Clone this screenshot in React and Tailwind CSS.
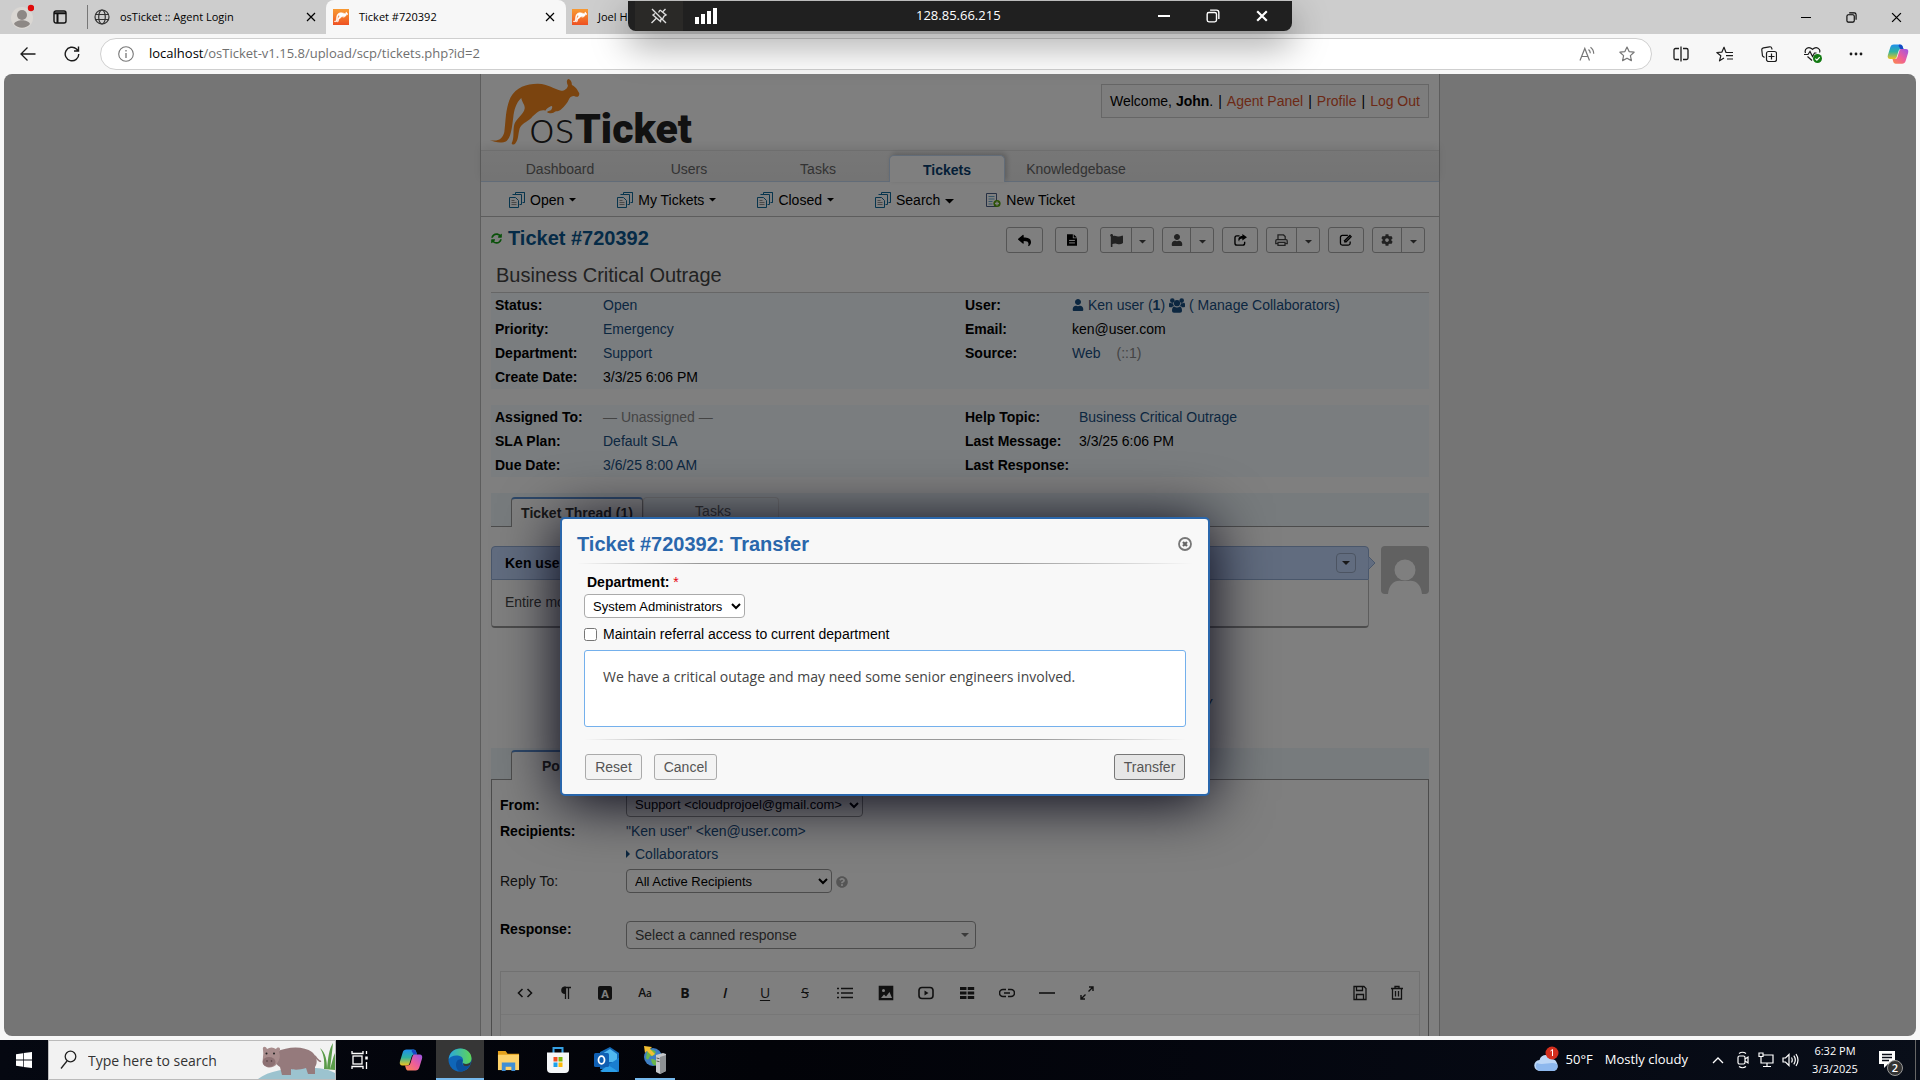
import React from "react";
import { FaReply, FaFlag, FaUser, FaCog, FaSyncAlt, FaQuestionCircle } from "react-icons/fa";

const ui = "font-['Open_Sans','Noto_Sans',sans-serif]";

const kangarooPath =
  "M30 210C52 216 68 208 73 186C78 150 76 116 92 82C108 52 140 41 172 41C204 40 222 58 244 62C254 62 262 56 264 47C259 38 260 28 266 27C272 28 276 36 276 45C288 50 294 62 298 70C299 78 294 82 288 80C280 76 272 80 268 86C262 100 254 108 244 118C238 126 226 122 222 128C216 132 204 130 202 127C200 122 210 124 214 119C218 112 218 108 214 108C206 112 200 116 196 122C180 118 168 130 154 144C140 156 124 162 119 176C114 194 116 208 107 219C103 225 96 225 95 220C104 206 98 182 103 164C106 148 132 132 134 116C136 104 126 98 124 84C108 98 102 122 100 142C96 172 94 200 80 213C66 221 44 217 30 210Z";

function Favicon() {
  return (
    <span className="flex size-4 shrink-0 items-center justify-center bg-linear-to-b from-[#f79a33] to-[#ee4f22]">
      <svg viewBox="28 22 274 208" className="size-[14px] text-white" fill="currentColor" stroke="currentColor" strokeWidth="10" aria-hidden="true">
        <path d={kangarooPath} />
      </svg>
    </span>
  );
}

function CloseX({ className = "size-[10px]", w = 1.2 }) {
  return (
    <svg viewBox="0 0 10 10" className={className} stroke="currentColor" strokeWidth={w} fill="none">
      <path d="M1 1L9 9M9 1L1 9" />
    </svg>
  );
}

function Restore({ className = "size-3" }) {
  return (
    <svg viewBox="0 0 12 12" className={className} stroke="currentColor" strokeWidth="1.2" fill="none">
      <rect x="1" y="3" width="8" height="8" rx="1.5" />
      <path d="M3.5 1H9a2 2 0 0 1 2 2v5.5" />
    </svg>
  );
}

function Copilot({ className }) {
  return (
    <svg viewBox="0 0 24 24" className={className} aria-hidden="true">
      <defs>
        <linearGradient id="cpA" x1="0" y1="0" x2="0" y2="1">
          <stop offset="0" stopColor="#1f8fef" />
          <stop offset=".5" stopColor="#2fb3a0" />
          <stop offset="1" stopColor="#f3c41d" />
        </linearGradient>
        <linearGradient id="cpB" x1="1" y1="0" x2="0" y2="1">
          <stop offset="0" stopColor="#9a55e8" />
          <stop offset=".5" stopColor="#ee5d9a" />
          <stop offset="1" stopColor="#fb8a4a" />
        </linearGradient>
      </defs>
      <path d="M7.5 1.5h7c1.600 0 2.200.8 2.700 2.300l.8 2.700h-2.500c-1.700 0-2.500.8-3 2.500l-1.900 6.300c-.5 1.600-1.200 2.200-2.800 2.200H3.500C1 17.500.3 15.700 1 13.200L3.700 4.400C4.400 2.300 5.500 1.500 7.500 1.500Z" fill="url(#cpA)" />
      <path d="M13.5 1.5c2 0 3 .8 3.700 2.800l.8 2.500h-3.200L12.500 3Z" fill="#1747c4" />
      <path d="M16.5 22.5h-7c-1.600 0-2.200-.8-2.700-2.300L6 17.500h2.500c1.700 0 2.500-.8 3-2.500l1.900-6.300c.5-1.600 1.200-2.200 2.800-2.200h4.300c2.500 0 3.200 1.800 2.500 4.300l-2.700 8.800c-.7 2.100-1.800 2.900-3.800 2.900Z" fill="url(#cpB)" />
    </svg>
  );
}

function TabStrip() {
  return (
    <div className={`flex h-[34px] items-stretch bg-[#cdcdcd] text-[11px] text-black ${ui}`}>
      <div className="flex w-[87px] shrink-0 items-center pl-[10px]">
        <svg viewBox="0 0 24 26" className="h-[26px] w-6">
          <circle cx="12" cy="14" r="11" fill="#dad7d3" />
          <circle cx="12" cy="11" r="5" fill="#8d8885" />
          <path d="M4 20c2-5 14-5 16 0c-4 5-12 5-16 0Z" fill="#8d8885" />
          <circle cx="21" cy="4" r="3.2" fill="#e00b0b" />
        </svg>
        <button aria-label="Tab actions" className="ml-[19px]">
          <svg viewBox="0 0 14 14" className="size-[14px]" fill="none" stroke="#111" strokeWidth="1.4">
            <rect x="1" y="1" width="12" height="12" rx="2" />
            <path d="M1 3.2h12M4.5 3.5V13" strokeWidth="2" />
          </svg>
        </button>
      </div>
      <div className="flex w-[239px] shrink-0 items-center">
        <span className="h-6 w-px bg-[#777]" />
        <svg viewBox="0 0 16 16" className="ml-[6px] size-4" fill="none" stroke="#333" strokeWidth="1.2">
          <circle cx="8" cy="8" r="7" />
          <ellipse cx="8" cy="8" rx="3.3" ry="7" />
          <path d="M1.5 5.5h13M1.5 10.5h13" />
        </svg>
        <span className="ml-[10px] flex-1">osTicket :: Agent Login</span>
        <button aria-label="Close tab" className="mr-[10px]"><CloseX /></button>
      </div>
      <div className="flex w-60 shrink-0 items-center rounded-t-lg bg-[#f7f7f7] pl-[7px]">
        <Favicon />
        <span className="ml-[10px] flex-1">Ticket #720392</span>
        <button aria-label="Close tab" className="mr-[11px]"><CloseX /></button>
      </div>
      <div className="flex w-60 items-center pl-[6px]">
        <Favicon />
        <span className="ml-[10px]">Joel H</span>
      </div>
      <div className="ml-auto flex items-center gap-[34px] pr-[18px]">
        <button aria-label="Minimize" className="flex w-3 justify-center"><span className="h-px w-[10px] bg-black" /></button>
        <button aria-label="Restore"><Restore className="size-[11px]" /></button>
        <button aria-label="Close"><CloseX className="size-[11px]" /></button>
      </div>
    </div>
  );
}

function AddressBar() {
  return (
    <div className="flex h-10 items-center bg-[#f7f7f7] text-[#1b1b1b]">
      <button aria-label="Back" className="ml-5">
        <svg viewBox="0 0 16 16" className="size-4" fill="none" stroke="currentColor" strokeWidth="1.3"><path d="M15.5 8H1M7.5 1.5L1 8l6.500 6.500" /></svg>
      </button>
      <button aria-label="Refresh" className="ml-7">
        <svg viewBox="0 0 16 16" className="size-4" fill="none" stroke="currentColor" strokeWidth="1.4"><path d="M14.800 8A6.800 6.800 0 1 1 12.500 2.900L14 4.500M14.500 0.500V5H10" /></svg>
      </button>
      <div className="ml-5 flex h-8 flex-1 items-center rounded-full border border-[#cfcfcf] bg-white">
        <svg viewBox="0 0 16 16" className="ml-[17px] size-4" fill="none" stroke="#777" strokeWidth="1.1">
          <circle cx="8" cy="8" r="7.3" />
          <path d="M8 7v5M8 4v1.500" strokeWidth="1.3" />
        </svg>
        <div className={`ml-[15px] flex-1 text-[13px] text-[#707070] ${ui}`}>
          <span className="text-black">localhost</span>/osTicket-v1.15.8/upload/scp/tickets.php?id=2
        </div>
        <button aria-label="Read aloud" className="mr-6 text-[#777]">
          <svg viewBox="0 0 16 16" className="size-4" fill="none" stroke="currentColor" strokeWidth="1.2"><path d="M1 14.500L5.800 2.500L10.500 14.500M2.600 10.500h6.400M9.500 3.500c1.300 1 1.800 2.300 1.800 3.800M11.500 1.200c2.200 1.600 3.200 3.800 3.200 6.600" /></svg>
        </button>
        <button aria-label="Favorite" className="mr-4 text-[#777]">
          <svg viewBox="0 0 16 16" className="size-4" fill="none" stroke="currentColor" strokeWidth="1.2" strokeLinejoin="round"><path d="M8 1l2.100 4.600 5 .6-3.700 3.400 1 5L8 12.200 3.600 14.600l1-5L.9 6.200l5-.6Z" /></svg>
        </button>
      </div>
      <div className="ml-[21px] flex items-center gap-[27px] pr-[11px]">
        <svg viewBox="0 0 16 16" className="size-4" fill="none" stroke="currentColor" strokeWidth="1.3"><path d="M6 2.500H2.500a1.500 1.500 0 0 0-1.500 1.500v8a1.500 1.500 0 0 0 1.500 1.500H6M10 2.500h3.500A1.500 1.500 0 0 1 15 4v8a1.500 1.500 0 0 1-1.500 1.500H10M8 0.500v15" /></svg>
        <svg viewBox="0 0 18 16" className="h-4 w-[18px]" fill="none" stroke="currentColor" strokeWidth="1.2" strokeLinejoin="round"><path d="M11 6.500H10L8 1.200 5.800 6.200.8 6.500 4.800 9.800 3.500 14.800 8 12M11 6.500h6M10 9.700h7M11 13h6" /></svg>
        <svg viewBox="0 0 16 16" className="size-4" fill="none" stroke="currentColor" strokeWidth="1.2"><path d="M3.500 11.500L1.500 10 .8 4A2 2 0 0 1 2.500 1.800L8.500.8A2 2 0 0 1 10.800 2.300L11 3.500" /><rect x="5.5" y="5.5" width="10" height="10" rx="2" /><path d="M10.500 7.500v6M7.500 10.500h6" /></svg>
        <svg viewBox="0 0 18 17" className="h-[17px] w-[18px]" fill="none" stroke="currentColor" strokeWidth="1.2"><path d="M1.500 7C0 3 4.500-.5 8.500 3.300C12.500-.5 17 3 15.500 6.500M0 8.500h4l2-3 2.500 5 2-3.500h2M3.500 10.500L8 14.500" /><circle cx="13.5" cy="12.5" r="4.5" fill="#137a13" stroke="none" /><path d="M11.300 12.600l1.600 1.500 2.800-3" stroke="#fff" /></svg>
        <svg viewBox="0 0 14 4" className="h-1 w-[14px]" fill="currentColor"><circle cx="2" cy="2" r="1.4" /><circle cx="7" cy="2" r="1.4" /><circle cx="12" cy="2" r="1.4" /></svg>
        <Copilot className="-ml-[3px] size-[22px]" />
      </div>
    </div>
  );
}

function RemoteBar() {
  return (
    <div className={`absolute top-px left-1/2 z-40 flex h-[30px] w-[664px] -translate-x-1/2 items-center rounded-b-lg bg-[#202020] text-white shadow-[0_14px_36px_rgba(0,0,0,0.38)] ${ui}`}>
      <button aria-label="Unpin" className="ml-[7px] flex h-full w-12 items-center justify-center bg-[#2a2927]">
        <svg viewBox="0 0 18 16" className="h-4 w-[18px]" fill="none" stroke="#ddd" strokeWidth="1.4"><path d="M2 1l14 14M10 2l6 5-2 1.200-1.500 3M10 2L8.500 4.500M5 5.500L3 7l7.500 6.500L11 11M6 10.500L1.500 15M15.500 1L13 3.500" /></svg>
      </button>
      <span className="ml-3 flex h-4 items-end gap-[2px]">
        <i className="h-[7px] w-1 bg-white" /><i className="h-[10px] w-1 bg-white" /><i className="h-[13px] w-1 bg-white" /><i className="h-4 w-1 bg-white" />
      </span>
      <span className="ml-[199px] text-[13px]">128.85.66.215</span>
      <div className="ml-auto flex items-center gap-9 pr-6">
        <button aria-label="Minimize"><span className="block h-[2px] w-3 bg-white" /></button>
        <button aria-label="Restore"><Restore className="size-[14px]" /></button>
        <button aria-label="Close"><CloseX className="size-3" w={1.8} /></button>
      </div>
    </div>
  );
}

function Pages() {
  return (
    <svg viewBox="0 0 16 16" className="size-4 shrink-0" fill="#fff" stroke="#0f6a9c" strokeWidth="1">
      <path d="M6.500.5h9v10h-2M6.500.5v2M15.500.5v10" /><path d="M3.500 2.500h9v10h-2" /><path d="M.5 5.500h6l3 3v7h-9Z" /><path d="M2.500 8.500h3M2.500 10.500h5M2.500 12.500h5" strokeWidth=".8" stroke="#777" />
    </svg>
  );
}

function Caret({ className = "w-[7px]" }) {
  return <svg viewBox="0 0 8 4" className={`shrink-0 ${className}`} fill="currentColor"><path d="M0 0h8L4 4Z" /></svg>;
}

function Group() {
  return (
    <svg viewBox="0 0 16 15" className="h-[15px] w-4 shrink-0" fill="currentColor">
      <circle cx="3.3" cy="2.6" r="2.3" />
      <circle cx="12.7" cy="2.6" r="2.3" />
      <circle cx="8" cy="5.2" r="3.1" />
      <path d="M0 8.500V6.500C0 5 .8 4.500 1.500 4.900C2.500 5.400 3.500 5.500 4.200 5.200C4.100 6.400 4.500 7.400 5.200 8.100C4.200 8.200 3.500 8.600 3 9.200H1Q0 9.200 0 8.500ZM16 8.500V6.500C16 5 15.200 4.500 14.500 4.900C13.500 5.400 12.500 5.500 11.800 5.200C11.900 6.400 11.500 7.400 10.800 8.100C11.800 8.200 12.500 8.600 13 9.200H15Q16 9.200 16 8.500Z" />
      <path d="M3 13C3 10 3.800 8.500 5.200 8.500C7 9.800 9 9.800 10.800 8.500C12.200 8.500 13 10 13 13Q13 14.800 11 14.800H5Q3 14.800 3 13Z" />
    </svg>
  );
}

const actionBtn = "flex h-[26px] items-center justify-center rounded-[3px] border border-[#aaa] text-black";

function SplitAction({ icon, label, left, right }) {
  return (
    <div className="flex h-[26px] overflow-hidden rounded-[3px] border border-[#aaa] text-[#444]">
      <button aria-label={label} className={`flex items-center justify-center border-r border-[#aaa] ${left}`}>{icon}</button>
      <button aria-label={`${label} menu`} className={`flex items-center justify-center pt-1 ${right}`}><Caret /></button>
    </div>
  );
}

function Info({ rows, labelW }) {
  return (
    <table className="w-full table-fixed border-collapse">
      <tbody>
        {rows.map(([k, v]) => (
          <tr key={k} className="h-6">
            <th className={`pl-1 text-left font-bold text-black ${labelW}`}>{k}:</th>
            <td className="text-black">{v}</td>
          </tr>
        ))}
      </tbody>
    </table>
  );
}

const A = ({ children }) => <a href="#ticket" className="text-[#184e81]">{children}</a>;

function PageHeader() {
  return (
    <>
      <header className="flex h-[76px] items-start justify-between pr-[10px] pl-[9px]">
        <a href="#home" aria-label="osTicket home" className="block">
          <svg viewBox="0 0 200 72" className="h-[72px] w-[200px] overflow-visible">
            <g transform="translate(-10 -4) scale(0.333)" fill="#f7891f">
              <path d={kangarooPath} />
            </g>
            <text x="39" y="69" fontSize="46" fill="#222" fontFamily="Lato" fontWeight="300">os</text>
            <text x="85" y="69" fontSize="41" fill="#222" fontFamily="Roboto" fontWeight="900">Ticket</text>
          </svg>
        </a>
        <p className="mt-[10px] flex h-[34px] w-[328px] items-center justify-between border border-[#ccc] bg-[#fafafa] px-2 text-black">
          <span>Welcome, <b>John</b>.</span>|
          <a href="#agent" className="text-[#d9532c]">Agent Panel</a>|
          <a href="#profile" className="text-[#d9532c]">Profile</a>|
          <a href="#logout" className="text-[#d9532c]">Log Out</a>
        </p>
      </header>
      <nav className="flex h-8 items-end gap-[13px] border-t border-b border-t-[#ddd] border-b-[#c5d9f1] bg-linear-to-b from-[#eee] to-[#e8e8e8] pl-[21px] shadow-[0_-4px_8px_rgba(0,0,0,0.08)]">
        {["Dashboard", "Users", "Tasks", "Tickets", "Knowledgebase"].map((t) => (
          <a key={t} href={`#${t}`} className={t === "Tickets" ? "-mb-px flex h-[27px] w-[116px] items-center justify-center rounded-t-[5px] border border-b-0 border-[#c5d9f1] bg-white pt-px font-bold text-[#0a3f6f] shadow-[2px_-2px_5px_rgba(0,0,0,0.2)]" : "flex h-[27px] w-[116px] items-center justify-center pt-[2px] text-[#666]"}>{t}</a>
        ))}
      </nav>
      <nav className="flex h-[35px] items-center border-b border-[#bbb] pt-[2px] pl-7 text-black">
        {["Open", "My Tickets", "Closed"].map((t) => (
          <a key={t} href={`#${t}`} className="mr-[41px] flex items-center gap-[5px]"><Pages />{t}<Caret className="w-[7px]" /></a>
        ))}
        <a href="#search" className="mr-8 flex items-center gap-[5px]"><Pages />Search<Caret className="mt-[3px] w-[9px]" /></a>
        <a href="#new" className="flex items-center gap-[5px]">
          <svg viewBox="0 0 15 16" className="h-4 w-[15px]" fill="#fff" stroke="#4b5f86"><path d="M.5 1.500h10v13h-10Z" /><path d="M2.500 4.500h6M2.500 7h6M2.500 9.500h4M2.500 12h4" stroke="#5aa0c8" strokeWidth=".9" /><circle cx="11" cy="11.5" r="3.6" fill="#58a50c" stroke="none" /><path d="M11 9.500v4M9 11.500h4" stroke="#fff" strokeWidth="1.3" /></svg>
          New Ticket
        </a>
      </nav>
    </>
  );
}

function TicketHead() {
  return (
    <>
      <div className="mt-[10px] flex items-start justify-between pr-1">
        <h2 className="flex items-center gap-[6px] text-[20px] leading-[22px] font-bold text-[#0a568e]">
          <FaSyncAlt className="size-[11px] text-[#12a012]" />Ticket #720392
        </h2>
        <div className="flex gap-2">
          <button aria-label="Reply" className={`${actionBtn} mr-1 w-[37px]`}><FaReply className="size-[13px]" /></button>
          <button aria-label="Note" className={`${actionBtn} mr-1 w-[33px]`}>
            <svg viewBox="0 0 12 14" className="h-3 w-[10px]" fill="currentColor"><path d="M0 0h7v5h5v9H0ZM8 0l4 4H8Z" /><path d="M2.500 7.500h7M2.500 10.500h7" stroke="#fff" strokeWidth="1.2" /></svg>
          </button>
          <SplitAction label="Flag" left="w-[31px]" right="w-[21px]" icon={<FaFlag className="size-[13px]" />} />
          <SplitAction label="Assign" left="w-7" right="w-[22px]" icon={<FaUser className="size-3" />} />
          <button aria-label="Transfer ticket" className={`${actionBtn} w-9`}>
            <svg viewBox="0 0 14 13" className="h-3 w-[13px]" fill="none" stroke="currentColor" strokeWidth="1.5"><path d="M6 2H3A2 2 0 0 0 1 4v6a2 2 0 0 0 2 2h6.500a2 2 0 0 0 2-2V8.500" /><path d="M9 0l5 3.500L9 7V4.800C7 4.800 5.500 5.500 5.500 8.500C3.500 5 5.500 2.200 9 2.200Z" fill="currentColor" stroke="none" /></svg>
          </button>
          <SplitAction label="Print" left="w-[30px]" right="w-[22px]" icon={<svg viewBox="0 0 14 13" className="h-3 w-[13px]" fill="none" stroke="currentColor" strokeWidth="1.4"><path d="M3.200 6V1h6l1.800 1.800V6M3.200 9h7.600v3.300H3.200ZM3 10.500H.8V7.500q0-1.300 1.200-1.300h10q1.200 0 1.200 1.300v3H11" /></svg>} />
          <button aria-label="Edit" className={`${actionBtn} w-9`}>
            <svg viewBox="0 0 14 13" className="h-3 w-[14px]" fill="none" stroke="currentColor" strokeWidth="1.4"><path d="M9 1.500H3a2 2 0 0 0-2 2V10a2 2 0 0 0 2 2h6.500a2 2 0 0 0 2-2V8" /><path d="M5 9.300V6.800L11.200.6l2.300 2.300L7.400 9.300Z" fill="currentColor" stroke="none" /><path d="M6.500 7.700L11.500 2.700" stroke="#fff" strokeWidth=".6" /></svg>
          </button>
          <SplitAction label="Settings" left="w-[29px]" right="w-[22px]" icon={<FaCog className="size-3" />} />
        </div>
      </div>
      <h3 className="mt-[10px] h-[30px] border-b border-[#ccc] pl-[5px] text-[20px] leading-6 text-[#444]">Business Critical Outrage</h3>
      <div className="grid grid-cols-2 items-start bg-[#f4faff]">
        <Info labelW="w-28" rows={[["Status", <A>Open</A>], ["Priority", <A>Emergency</A>], ["Department", <A>Support</A>], ["Create Date", "3/3/25 6:06 PM"]]} />
        <div className="pl-px">
          <Info labelW="w-[111px]" rows={[
            ["User", <a href="#user" className="flex items-center gap-1 text-[#184e81]"><FaUser className="size-3" /><span>Ken user (<b>1</b>)</span><Group /><span>( Manage Collaborators)</span></a>],
            ["Email", "ken@user.com"],
            ["Source", <><A>Web</A><span className="ml-4 text-[#888]">(::1)</span></>],
          ]} />
        </div>
      </div>
      <div className="mt-4 grid grid-cols-2 items-start bg-[#f4faff]">
        <Info labelW="w-28" rows={[["Assigned To", <span className="text-[#888]">— Unassigned —</span>], ["SLA Plan", <A>Default SLA</A>], ["Due Date", <A>3/6/25 8:00 AM</A>]]} />
        <div className="pl-px">
          <Info labelW="w-[118px]" rows={[["Help Topic", <A>Business Critical Outrage</A>], ["Last Message", "3/3/25 6:06 PM"], ["Last Response", ""]]} />
        </div>
      </div>
    </>
  );
}

function Thread() {
  return (
    <>
      <div className="mt-4 flex h-[34px] items-end border-b border-[#999] bg-[#eef6fb] pl-5">
        <button className="-mb-px flex h-[30px] w-[132px] items-center justify-center rounded-t-[4px] border border-t-2 border-b-0 border-[#999] border-t-[#5a8fd0] bg-white font-bold text-[#333]">Ticket Thread (1)</button>
        <button className="mb-px flex h-7 w-[136px] items-center justify-center rounded-t-[4px] border border-b-0 border-[#ddd] pb-[2px] pl-1 text-[#666]">Tasks</button>
      </div>
      <div className="mt-[19px] flex items-start justify-between">
        <article className="mr-3 flex-1">
          <div className="relative flex h-[34px] items-center justify-between rounded-t-[4px] border border-[#94aed6] bg-[#c3d9ff] pr-3 pl-[13px]">
            <b className="text-black">Ken user</b>
            <button aria-label="Entry menu" className="flex size-5 items-center justify-center rounded-[4px] border border-[#98a9c4] text-[#333]"><Caret className="w-2" /></button>
            <svg viewBox="0 0 7 14" className="absolute top-[9px] -right-[7px] h-[14px] w-[7px]"><path d="M0 0L7 7L0 14Z" fill="#c3d9ff" stroke="#94aed6" /></svg>
          </div>
          <div className="h-12 rounded-b-[4px] border border-t-0 border-b-2 border-[#bbb] border-b-[#999] pt-3 pl-[13px] text-[#444]">Entire mobile</div>
        </article>
        <svg viewBox="0 0 48 48" className="size-12 rounded-[4px]"><rect width="48" height="48" fill="#c2c2c2" /><circle cx="24" cy="24" r="10.5" fill="#fff" /><path d="M7 48C8 38 14 34 20 35h8c6-1 12 3 13 13Z" fill="#fff" /></svg>
      </div>
      <div className="flex h-[120px] items-center pt-7 pl-[714px] text-[#184e81]"><a href="#author" className="italic">y</a></div>
    </>
  );
}

const T = ({ label, children, fill, w = "w-10" }) => (
  <button type="button" aria-label={label} className={`flex justify-center ${w}`}>
    <svg viewBox="0 0 16 16" className="size-4" fill={fill ? "currentColor" : "none"} stroke={fill ? "none" : "currentColor"} strokeWidth="1.6">{children}</svg>
  </button>
);

const selectCls = "rounded-[4px] border border-[#999] bg-white pl-1 text-[13px] text-black";

function ReplyPanel() {
  return (
    <>
      <div className="flex h-8 items-end border-b border-[#999] bg-[#eef6fb] pl-5">
        <button className="-mb-px flex h-[30px] w-[132px] items-center rounded-t-[4px] border border-t-2 border-b-0 border-[#999] border-t-[#5a8fd0] bg-white pl-[30px] font-bold text-[#333]">Post Reply</button>
      </div>
      <form className="border-x border-[#999] px-2 pt-[11px]">
        <div className="flex h-[27px] items-center">
          <label htmlFor="from" className="w-[126px] font-bold text-black">From:</label>
          <select id="from" className={`${selectCls} h-6 w-[237px]`}><option>{"Support <cloudprojoel@gmail.com>"}</option></select>
        </div>
        <div className="flex h-[26px] items-center">
          <span className="w-[126px] font-bold text-black">Recipients:</span><A>{'"Ken user" <ken@user.com>'}</A>
        </div>
        <div className="flex h-5 items-center pl-[126px] text-[#184e81]">
          <a href="#collab" className="flex items-center gap-[5px]"><svg viewBox="0 0 4 8" className="h-2 w-1" fill="currentColor"><path d="M0 0l4 4-4 4Z" /></svg>Collaborators</a>
        </div>
        <div className="mt-[5px] flex h-6 items-center">
          <label htmlFor="replyto" className="w-[126px] text-[#222]">Reply To:</label>
          <select id="replyto" className={`${selectCls} h-6 w-[206px]`}><option>All Active Recipients</option></select>
          <FaQuestionCircle className="mt-[2px] ml-1 size-3 text-[#aaa]" />
        </div>
        <div className="mt-7 flex items-start">
          <label htmlFor="canned" className="w-[126px] leading-4 font-bold text-black">Response:</label>
          <button id="canned" type="button" className="flex h-7 w-[350px] items-center justify-between rounded-[4px] border border-[#999] pr-[6px] pl-2 text-[#444]">Select a canned response<Caret className="w-2 text-[#777]" /></button>
        </div>
        <div className="mt-[22px] border border-[#e2e2e2]">
          <div className="flex h-[43px] items-center border-b border-[#eee] px-1 text-[#222]">
            <T label="Code"><path d="M5.500 4L1.500 8l4 4M10.500 4l4 4-4 4" /></T>
            <T label="Format"><path d="M8.500 2.500V14M11.500 2.500V14M14 2.500H7" strokeWidth="1.3" /><path d="M8 2.200a3 3 0 0 0 0 6Z" fill="currentColor" /></T>
            <button type="button" aria-label="Text color" className="flex w-10 justify-center"><span className="flex size-[14px] items-center justify-center rounded-[2px] bg-[#222] font-['Open_Sans'] text-[11px] leading-none font-bold text-white">A</span></button>
            <button type="button" aria-label="Font" className={`flex w-10 items-baseline justify-center font-semibold ${ui}`}><span className="text-[12px]">A</span><span className="text-[10px]">a</span></button>
            <button type="button" aria-label="Bold" className={`w-10 text-[14px] font-bold ${ui}`}>B</button>
            <button type="button" aria-label="Italic" className={`w-10 text-[14px] font-semibold italic ${ui}`}>I</button>
            <button type="button" aria-label="Underline" className={`w-10 text-[14px] underline underline-offset-2 ${ui}`}>U</button>
            <button type="button" aria-label="Strikethrough" className={`w-10 text-[14px] line-through ${ui}`}>S</button>
            <T label="List"><path d="M4 3.500h12M4 8h12M4 12.500h12M0 3.500h2M0 8h2M0 12.500h2" /></T>
            <T label="Image" w="w-[41px]"><path d="M1.500 1.500h13v13h-13Z" fill="currentColor" /><circle cx="5.5" cy="5.5" r="1.5" fill="#fff" stroke="none" /><path d="M3 13l3-3.500 2 2L11.500 7 14 13Z" fill="#fff" stroke="none" /></T>
            <T label="Video"><rect x="1" y="2.5" width="14" height="11" rx="3" /><path d="M6.500 5.500l4 2.500-4 2.500Z" fill="currentColor" stroke="none" /></T>
            <T label="Table" fill w="w-[41px]"><path d="M1 2h6.500v3H1ZM8.700 2h6.500v3H8.700ZM1 6.500h6.500v3H1ZM8.700 6.500h6.500v3H8.700ZM1 11h6.500v3H1ZM8.700 11h6.500v3H8.700Z" /></T>
            <T label="Link"><path d="M7 4.500H4a3.500 3.500 0 0 0 0 7h3M9 4.500h3a3.500 3.500 0 0 1 0 7H9M5 8h6" /></T>
            <T label="Line"><path d="M0 8h16" /></T>
            <T label="Fullscreen"><path d="M9.500 6.500L14 2M6.500 9.500L2 14M10 2h4v4M2 10v4h4" strokeWidth="1.4" /></T>
            <span className="flex-1" />
            <T label="Save draft" w="w-[37px]"><path d="M2 1.500h10l2 2V14.500H2ZM4.500 1.500v4h6v-4M4.500 14.500V9.500h7v5" strokeWidth="1.3" /></T>
            <T label="Delete draft" w="w-[37px]"><path d="M2 3.500h12M3.500 3.500V14h9V3.500M6 3V1.500h4V3M6.500 6v5.500M9.500 6v5.500" strokeWidth="1.3" /></T>
          </div>
          <div className="h-40" />
        </div>
      </form>
    </>
  );
}

function TransferDialog() {
  const btn = "h-[26px] rounded-[3px] border text-[#555]";
  return (
    <section role="dialog" aria-labelledby="dlg" className="absolute top-[443px] left-1/2 z-20 -ml-[400px] w-[650px] rounded-[5px] border-2 border-[#2a67ac] bg-[#f8f8f8] px-[15px] pt-[13px] pb-[14px] shadow-[0_5px_60px_#000011]">
      <div className="flex items-center justify-between">
        <h3 id="dlg" className="text-[20px] leading-6 font-bold text-[#2a67ac]">Ticket #720392: Transfer</h3>
        <button aria-label="Close dialog" className="mr-px">
          <svg viewBox="0 0 14 14" className="size-[14px]" fill="none" stroke="#777"><circle cx="7" cy="7" r="6" strokeWidth="1.8" /><path d="M5 5l4 4M9 5l-4 4" strokeWidth="2.2" stroke="#666" /></svg>
        </button>
      </div>
      <div className="mt-[7px] h-px bg-[linear-gradient(to_right,transparent,#999_20%,#999_70%,transparent)]" />
      <form className="mx-[7px] mt-[7px] flex flex-col items-start">
        <label htmlFor="dept" className="pl-[3px] leading-[22px] font-bold text-black">Department: <span className="font-normal text-red-600">*</span></label>
        <select id="dept" className="mt-px h-6 w-[161px] rounded-[4px] border border-[#aaa] bg-white pl-1 text-[13px] text-black"><option>System Administrators</option></select>
        <label className="mt-[6px] flex h-5 items-center gap-[6px] text-black"><input type="checkbox" className="size-[13px]" />Maintain referral access to current department</label>
        <textarea aria-label="Transfer note" defaultValue="We have a critical outage and may need some senior engineers involved." className="mt-[6px] block h-[77px] w-full resize-none rounded-[3px] border border-[#74b0ec] bg-white px-[18px] py-[14px] font-['Open_Sans'] text-[14px] leading-6 text-[#444]" />
        <div className="mt-3 h-px w-full bg-[linear-gradient(to_right,transparent,#999_20%,#999_75%,transparent)]" />
        <div className="mt-[14px] flex w-full gap-3 px-px">
          <button type="reset" className={`${btn} w-[57px] border-[#aaa] bg-[#f3f3f3]`}>Reset</button>
          <button type="button" className={`${btn} w-[63px] border-[#aaa] bg-[#f3f3f3]`}>Cancel</button>
          <button type="submit" className={`${btn} ml-auto w-[71px] border-[#777] bg-[#e6e6e6]`}>Transfer</button>
        </div>
      </form>
    </section>
  );
}

function Hippo() {
  return (
    <svg viewBox="0 0 77 38" className="h-full w-[77px]">
      <path d="M0 38C12 29 34 26 54 27C64 27 72 29 77 32V38Z" fill="#9cc3cf" />
      <path d="M66 28C67 18 65 12 62 7C68 12 69 20 69 28C70 17 71 8 75 2C74 12 73 20 72 28C74 22 75 16 77 12V29Z" fill="#5b9c4a" />
      <path d="M18 11C30 5 46 5 54 11C59 15 60 22 57 26V33H50L48 27C42 29 36 29 33 28V34H24L22 26C16 22 14 16 18 11Z" fill="#957a7c" />
      <path d="M57 15q4 6 6 5" stroke="#957a7c" strokeWidth="1.5" fill="none" />
      <path d="M5 9C4 5 8 5 9 8C12 6 15 6 18 8C20 5 24 7 21 11C23 16 21 20 18 24C14 28 6 27 5 22C4 18 6 14 5 9Z" fill="#a88c8c" />
      <ellipse cx="11" cy="21" rx="6.5" ry="5" fill="#8d7173" />
      <circle cx="8.5" cy="12.5" r="1" fill="#222" /><circle cx="16" cy="12.5" r="1" fill="#222" />
      <circle cx="9" cy="20" r=".8" fill="#4d3a3d" /><circle cx="13.5" cy="20" r=".8" fill="#4d3a3d" />
    </svg>
  );
}

function Taskbar() {
  return (
    <footer className={`flex h-10 items-stretch bg-linear-to-r from-[#050811] via-[#020308] via-40% to-[#090e19] text-white ${ui}`}>
      <button aria-label="Start" className="flex w-12 items-center justify-center">
        <svg viewBox="0 0 16 16" className="size-4" fill="#fff"><path d="M0 2.200L7 1.200V7.600H0ZM7.700 1.100L16 0v7.600H7.700ZM0 8.400h7v6.400L0 13.800ZM7.700 8.400H16V16L7.700 14.900Z" /></svg>
      </button>
      <label className="flex w-[288px] items-center border border-[#bbb] bg-[#f2f2f2] pl-[11px]">
        <svg viewBox="0 0 17 20" className="h-5 w-[17px]" fill="none" stroke="#222" strokeWidth="1.3"><circle cx="10.5" cy="6.5" r="5.3" /><path d="M7 11L1 18.500" /></svg>
        <input aria-label="Search" placeholder="Type here to search" className="ml-[11px] w-0 flex-1 bg-transparent text-[14px] placeholder:text-[#333]" />
        <Hippo />
      </label>
      <button aria-label="Task view" className="flex w-12 items-center justify-center">
        <svg viewBox="0 0 18 20" className="h-5 w-[18px]" fill="none" stroke="#fff" strokeWidth="1.3"><rect x="2" y="6" width="9" height="8" /><path d="M1 1v2.500h11V1M1 19v-2.500h11V19M15.500 1v3M15.500 12v7" /><path d="M15.500 6.500v3" strokeWidth="2.5" /></svg>
      </button>
      <button aria-label="Copilot" className="ml-[3px] flex w-12 items-center justify-center"><Copilot className="size-6" /></button>
      <button aria-label="Edge" className="ml-px flex w-12 items-center justify-center border-b-2 border-[#76b9ed] bg-[#363636]">
        <svg viewBox="0 0 24 24" className="mt-[2px] size-6"><defs><linearGradient id="eg" x1="0" y1="0" x2="1" y2="0"><stop offset="0" stopColor="#2aa9dc" /><stop offset="1" stopColor="#5fd556" /></linearGradient></defs><circle cx="12" cy="12" r="11.5" fill="#0f66b8" /><path d="M.8 11C1.500 4.500 6.500.5 12.500.5C19 .5 23.500 5 23.500 10.500C23.500 14 21 16 18 16C15.500 16 14 15 14.600 13.700C15.500 12 15 8.500 11 7.800C6 7 2.500 8.500.8 11Z" fill="url(#eg)" /><path d="M14.500 13.500C13 16 15 18.500 18.500 18.300C20 18.200 21.500 17.500 22 17C20 21 16 23.500 12 23.500C8 22 7 16 9 13C10 11.500 13 10.500 14.800 12Z" fill="#0b4f9c" /><path d="M14.500 13.500C14 15 15.500 16 18 16C20 16 21.800 15.200 22.800 13.800L22.300 16.500C20.500 18.300 17.500 18.800 15.500 17.500Z" fill="#363636" /></svg>
      </button>
      <button aria-label="File Explorer" className="flex w-[49px] items-center justify-center">
        <svg viewBox="0 0 24 24" className="size-[23px]"><path d="M1 2h8l2 3h12v5H1Z" fill="#e4a11b" /><path d="M1 6h22v16H1Z" fill="#fdd26a" /><path d="M5 23v-9h14v9h-4v-4.500H9V23Z" fill="#3f8fd4" /></svg>
      </button>
      <button aria-label="Store" className="flex w-[49px] items-center justify-center">
        <svg viewBox="0 0 24 28" className="h-7 w-6"><path d="M7.500 7V2h9v5" fill="none" stroke="#35a0e4" strokeWidth="2" /><path d="M1 6.500h22V23a4 4 0 0 1-4 4H5a4 4 0 0 1-4-4Z" fill="#f4f6f8" /><path d="M7.500 11h4v4.500h-4Z" fill="#f04e23" /><path d="M12.500 11h4v4.500h-4Z" fill="#7db80b" /><path d="M7.500 16.500h4V21h-4Z" fill="#1ca0ea" /><path d="M12.500 16.500h4V21h-4Z" fill="#fdb90a" /></svg>
      </button>
      <button aria-label="Outlook" className="flex w-[49px] items-center justify-center">
        <svg viewBox="0 0 26 28" className="h-7 w-[26px]"><path d="M6 6L16 1l9 6v16H6Z" fill="#1369b8" /><path d="M8 8l8-5 7 5v8H8Z" fill="#4fb7f0" /><path d="M6 25L25 12v12a2 2 0 0 1-2 2H8Z" fill="#2b9ee8" /><path d="M25 12L14 19l11 7Z" fill="#1a7ed0" /><rect y="7" width="15" height="14" rx="1.5" fill="#0f5fb3" /><ellipse cx="7.5" cy="14" rx="3" ry="3.8" fill="none" stroke="#fff" strokeWidth="1.8" /></svg>
      </button>
      <button aria-label="IIS Manager" className="mx-1 flex w-10 items-center justify-center border-b-2 border-[#76b9ed]">
        <svg viewBox="0 0 24 30" className="mt-[2px] h-[30px] w-6"><circle cx="10" cy="12" r="9" fill="#3f7fc4" /><path d="M4 7q5-5 9 0q-2 5-6 4q-2 6-4 2ZM8 14q6-1 6 6q-5 2-6-6Z" fill="#69b54b" /><path d="M1 1l8 1-2 2 5 5-3 2-5-5-2 2Z" fill="#f3bf32" /><path d="M13 10l7-2 3 1v17l-6 3-4-2Z" fill="#c6c9cc" /><path d="M17 12l6-2v16l-6 3Z" fill="#8d9194" /><path d="M13.500 13l3 .7M13.500 16l3 .7" stroke="#555" /></svg>
      </button>
      <div className="ml-auto flex items-center">
        <svg viewBox="0 0 26 28" className="h-7 w-[26px]"><path d="M6 25a5.500 5.500 0 0 1-.5-11C7 8 15 7 17.500 13C24 12.500 26.500 25 19 25Z" fill="#bcd7f7" /><path d="M6 25a5 5 0 0 1-3-8c6 3 14-2 20 1c2 4-1 7-4 7Z" fill="#8db8ee" /><circle cx="18" cy="7" r="6.5" fill="#d32f1e" /><path d="M16.500 5l2-1.500V10" stroke="#fff" fill="none" /></svg>
        <span className="ml-[6px] text-[13px]">50°F</span>
        <span className="ml-3 text-[13px]">Mostly cloudy</span>
        <svg viewBox="0 0 12 8" className="ml-6 h-2 w-3" fill="none" stroke="#fff" strokeWidth="1.3"><path d="M1 7l5-5 5 5" /></svg>
        <svg viewBox="0 0 14 18" className="ml-3 h-[18px] w-[14px]" fill="none" stroke="#fff" strokeWidth="1.2"><rect x="2" y="5" width="7" height="8" rx="1.5" /><path d="M9 8l3-2v6l-3-2M3 2.500Q6.500 0 10 2.500M3 15.500Q6.500 18 10 15.500" /></svg>
        <svg viewBox="0 0 16 16" className="ml-2 size-4" fill="none" stroke="#fff" strokeWidth="1.2"><path d="M5 3h10v8H3V8M9 11v3.500M5 14.500h8M1 1h4v3.500H1ZM3 4.500V8" /></svg>
        <svg viewBox="0 0 17 16" className="ml-2 h-4 w-[17px]" fill="none" stroke="#fff" strokeWidth="1.2"><path d="M1 6h2.500L7 2.500v11L3.500 10H1ZM9.500 5.500q1.500 2.500 0 5M11.800 3.700q3 4.300 0 8.600M14 2q4 6 0 12" /></svg>
        <div className="ml-3 flex w-12 flex-col items-center text-[11px] leading-[18px]"><span>6:32 PM</span><span>3/3/2025</span></div>
        <div className="relative ml-5 w-[28px]">
          <svg viewBox="0 0 16 18" className="h-[18px] w-4" fill="#fff"><path d="M0 0h16v13H9l-4 4v-4H0Z" /><path d="M3 3.500h10M3 6.500h10M3 9.500h7" stroke="#0a0e18" strokeWidth="1.3" /></svg>
          <span className="absolute top-[9px] left-[8px] flex size-4 items-center justify-center rounded-full border border-[#999] bg-[#333] text-[11px] font-semibold">2</span>
        </div>
        <span className="ml-2 h-full w-px bg-[#666]" />
        <span className="w-1" />
      </div>
    </footer>
  );
}

export default function App() {
  return (
    <div className="relative flex h-screen flex-col overflow-hidden bg-[#f7f7f7]">
      <TabStrip />
      <AddressBar />
      <RemoteBar />
      <main className="relative mx-1 mb-1 flex-1 overflow-hidden rounded-lg bg-[#eaeaea] font-['Liberation_Sans',Arial,sans-serif] text-[14px] leading-5">
        <div className="mx-auto min-h-full w-full max-w-[960px] border-x border-[#bbb] bg-white">
          <PageHeader />
          <div className="px-[10px]">
            <TicketHead />
            <Thread />
            <ReplyPanel />
          </div>
        </div>
        <div className="absolute inset-0 z-10 bg-black/50" />
        <TransferDialog />
      </main>
      <Taskbar />
    </div>
  );
}
